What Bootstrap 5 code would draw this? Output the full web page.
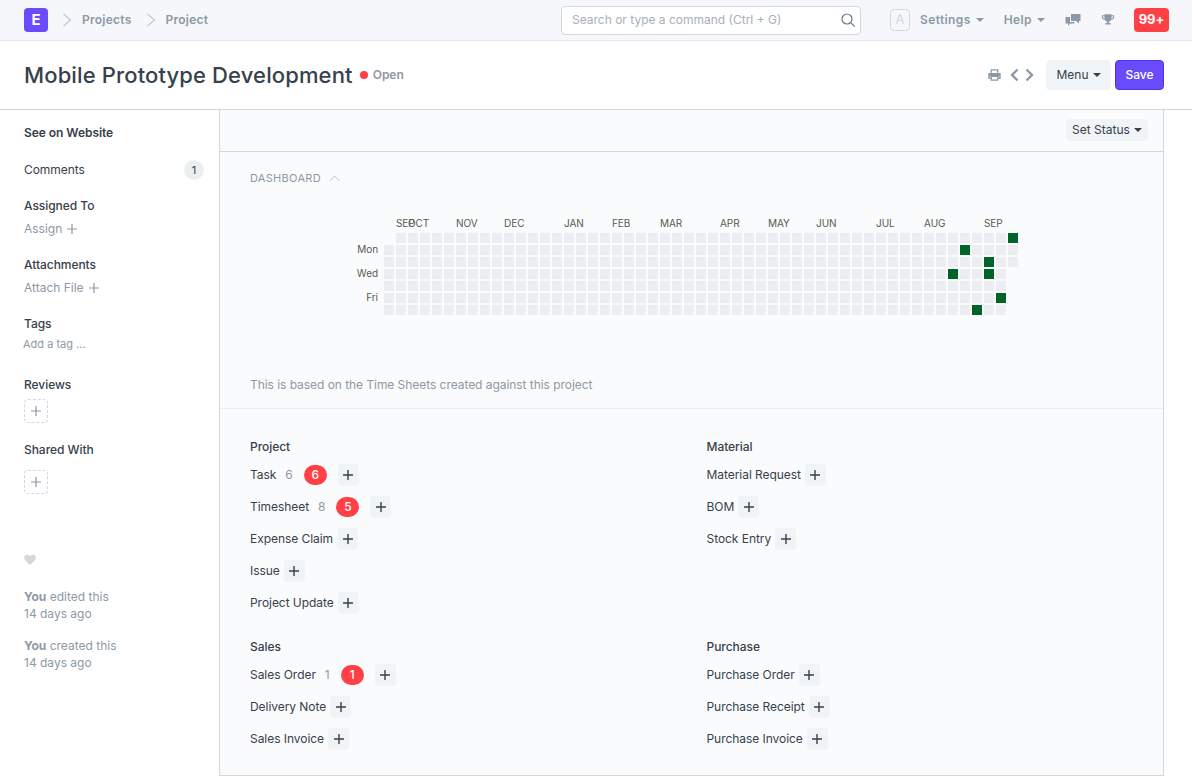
<!DOCTYPE html>
<html lang="en">
<head>
    <meta charset="UTF-8">
    <meta name="viewport" content="width=device-width, initial-scale=1.0">
    <title>Mobile Prototype Development</title>
    <link rel="stylesheet" href="https://cdn.jsdelivr.net/npm/bootstrap@5.3.0/dist/css/bootstrap.min.css">
    <style>
        html, body { height: 777px; overflow: hidden; }
        body { font-family: Inter, "Liberation Sans", sans-serif; font-size: 12px; letter-spacing: -.05px; color: #36414c; background: #fff; }
        .top-bar { height: 41px; background: #f5f7fa; border-bottom: 1px solid #e6e9ed; padding: 0 23px 0 24px; }
        .brand-box { width: 24px; height: 24px; border-radius: 4px; background: #6a4bfc; color: #fff; font-weight: 700; font-size: 15px; }
        .crumb { color: #8d99a6; font-weight: 600; font-size: 12px; letter-spacing: .25px; }
        .crumb-sep { margin: 0 10px 0 14px; }
        .search-box { width: 300px; height: 29px; background: #fff; border: 1px solid #d1d8dd; border-radius: 4px; color: #a7b0ba; padding: 0 4px 0 10px; letter-spacing: 0; }
        .avatar-box { width: 20px; height: 22px; border: 1px solid #d1d8dd; border-radius: 4px; color: #d1d8dd; font-size: 13px; margin-left: 29px; }
        .nav-text { color: #8d99a6; font-weight: 600; letter-spacing: .4px; }
        .nav-text .caret-down { margin-left: 5px; }
        .caret-down { display: inline-block; border-top: 4px solid currentColor; border-left: 4px solid transparent; border-right: 4px solid transparent; margin-left: 4px; vertical-align: 2px; }
        .alert-count { background: #ff4046; color: #fff; font-weight: 700; font-size: 13px; width: 35px; height: 24px; border-radius: 4px; margin-left: 19px; }
        .page-top { height: 69px; padding: 0 28px 0 24px; border-bottom: 1px solid #d1d8dd; }
        .page-name { font-size: 22px; font-weight: 500; letter-spacing: .13px; color: #36414c; margin: 0; line-height: 1; }
        .status-dot { width: 8px; height: 8px; border-radius: 50%; background: #ff4046; margin: 0 5px 0 7px; }
        .status-word { color: #8d99a6; font-weight: 600; letter-spacing: 0; }
        .grey-btn { background: #f0f4f7; color: #36414c; border: 0; border-radius: 4px; font-size: 12px; }
        .menu-btn { width: 65px; height: 30px; margin: 0 4px 0 11px; }
        .save-btn { width: 49px; height: 30px; background: #6a4bfc; color: #fff; border: 1px solid #5131e8; border-radius: 4px; font-size: 12px; font-weight: 500; }
        .page-body { height: 667px; }
        .side-col { width: 219px; flex: none; padding: 0 15px 0 24px; }
        .main-col { width: 945px; flex: none; height: 666px; background: #fafbfc; border: 1px solid #d1d8dd; border-top: 0; }
        .status-row { height: 42px; border-bottom: 1px solid #d1d8dd; padding: 0 15px 2px 0; }
        .status-btn { height: 22px; width: 82px; font-size: 12px; }
        .dash-block { height: 257px; border-bottom: 1px solid #ebeff2; padding: 20px 0 0 30px; }
        .dash-label { color: #8d99a6; font-size: 11px; letter-spacing: .3px; height: 12px; line-height: 12px; }
        .heat-map { display: block; margin: 0; position: absolute; top: 210px; left: 329px; }
        .heat-map text { font-family: Inter, "Liberation Sans", sans-serif; font-size: 10px; fill: #555b51; }
        .dash-note { color: #8d99a6; position: absolute; top: 378px; left: 250px; margin: 0; line-height: 14px; }
        .links-block { padding: 0 0 0 30px; }
        .links-col { width: 456.5px; flex: none; }
        .links-top { padding-top: 30px; }
        .links-bottom { padding-top: 20px; }
        .group-title { font-weight: 500; height: 16px; line-height: 16px; margin-bottom: 4px; }
        .link-row { height: 32px; }
        .link-count { color: #8d99a6; margin-left: 9px; }
        .red-count { background: #ff4046; color: #fff; width: 23px; height: 20px; border-radius: 10px; font-weight: 500; margin: 0 11px 0 11px; }
        .add-btn { width: 21px; height: 22px; background: #f0f4f7; border-radius: 4px; margin-left: 4px; }
        .side-title { font-weight: 500; line-height: 16px; }
        .side-muted { color: #8d99a6; line-height: 16px; letter-spacing: 0; gap: 5px; }
        .count-pill { width: 20px; height: 20px; border-radius: 50%; background: #ebeff2; color: #36414c; font-size: 11px; }
        .dash-add { width: 24px; height: 24px; border: 1px dashed #d1d8dd; border-radius: 4px; }
        .activity-line { color: #8d99a6; line-height: 17px; margin: 0; letter-spacing: 0; }
        .nav-chat { margin-left: 20px; }
        .nav-trophy { margin-left: 20px; }
    </style>
</head>
<body>
    <!-- Top navbar -->
    <nav class="top-bar d-flex align-items-center">
        <div class="brand-box d-flex align-items-center justify-content-center">E</div>
        <svg class="crumb-sep" width="10" height="14" viewBox="0 0 10 14" fill="none" stroke="#c0c9d2" stroke-width="1.2"><path d="M1.500 1l7 6-7 6"/></svg>
        <span class="crumb">Projects</span>
        <svg class="crumb-sep" width="10" height="14" viewBox="0 0 10 14" fill="none" stroke="#c0c9d2" stroke-width="1.2"><path d="M1.500 1l7 6-7 6"/></svg>
        <span class="crumb">Project</span>

        <div class="search-box d-flex align-items-center justify-content-between ms-auto">
            <span>Search or type a command (Ctrl + G)</span>
            <svg width="16" height="16" viewBox="0 0 16 16" fill="none" stroke="#6c7680" stroke-width="1.2"><circle cx="7" cy="7" r="5"/><path d="M10.700 10.700l4 4"/></svg>
        </div>
        <div class="avatar-box d-flex align-items-center justify-content-center">A</div>
        <span class="nav-text" style="margin-left:10px">Settings<span class="caret-down"></span></span>
        <span class="nav-text" style="margin-left:20px">Help<span class="caret-down"></span></span>
        <svg class="nav-chat" width="16" height="14" viewBox="0 0 16 14" fill="#8d99a6"><path d="M6 1h9.500v7H14v2.500L11 8H6z"/><path d="M.5 4H5v5h4.500v1.500H5L3 13v-2.500H.5z"/></svg>
        <svg class="nav-trophy" width="14" height="14" viewBox="0 0 16 15" fill="#8d99a6"><path d="M4 1h8v1h3v2c0 2-1.500 3-3.300 3.200C11 8.500 9.800 9.200 9 9.400V11h2v1.500H5V11h2V9.400C6.200 9.200 5 8.500 4.300 7.200 2.500 7 1 6 1 4V2h3zM2.200 3.200V4c0 1 .7 1.700 1.800 2V3.200zm9.800 0V6c1.100-.3 1.800-1 1.800-2v-.8z"/></svg>
        <div class="alert-count d-flex align-items-center justify-content-center">99+</div>
    </nav>

    <!-- Title row -->
    <header class="page-top d-flex align-items-center">
        <h1 class="page-name">Mobile Prototype Development</h1>
        <span class="status-dot"></span>
        <span class="status-word">Open</span>
        <div class="d-flex align-items-center ms-auto">
            <svg width="13" height="12" viewBox="0 0 14 13" fill="none" stroke="#8d99a6" stroke-width="1.400"><path d="M3.500 4V1h7v3"/><path d="M3 10H1V5h12v5h-2"/><path d="M3.500 8h7v4h-7z"/><path d="M1 5h12v3H1z" fill="#8d99a6" stroke="none"/></svg>
            <svg style="margin-left:8px" width="10" height="14" viewBox="0 0 10 14" fill="none" stroke="#8d99a6" stroke-width="2.400"><path d="M8.500 1.500L3 7l5.500 5.500"/></svg>
            <svg style="margin-left:6px" width="10" height="14" viewBox="0 0 10 14" fill="none" stroke="#8d99a6" stroke-width="2.400"><path d="M1.500 1.500L7 7l-5.500 5.500"/></svg>
            <button class="grey-btn menu-btn p-0">Menu<span class="caret-down"></span></button>
            <button class="save-btn p-0">Save</button>
        </div>
    </header>

    <div class="page-body d-flex">
        <!-- Left sidebar -->
        <aside class="side-col">
            <div class="side-title" style="margin-top:15px;font-weight:600">See on Website</div>
            <div class="d-flex align-items-center justify-content-between" style="margin-top:19px;height:20px">
                <span>Comments</span>
                <span class="count-pill d-flex align-items-center justify-content-center">1</span>
            </div>
            <div class="side-title" style="margin-top:18px">Assigned To</div>
            <div class="side-muted d-flex align-items-center" style="margin-top:7px">Assign
                <svg width="10" height="10" viewBox="0 0 10 10" stroke="#8d99a6" stroke-width="1.200"><path d="M5 0v10M0 5h10"/></svg></div>
            <div class="side-title" style="margin-top:20px">Attachments</div>
            <div class="side-muted d-flex align-items-center" style="margin-top:7px">Attach File
                <svg width="10" height="10" viewBox="0 0 10 10" stroke="#8d99a6" stroke-width="1.200"><path d="M5 0v10M0 5h10"/></svg></div>
            <div class="side-title" style="margin-top:20px">Tags</div>
            <div class="side-muted" style="margin:4px 0 0 -1px;font-size:11px">Add a tag ...</div>
            <div class="side-title" style="margin-top:25px">Reviews</div>
            <div class="dash-add d-flex align-items-center justify-content-center" style="margin-top:6px">
                <svg width="10" height="10" viewBox="0 0 10 10" stroke="#8d99a6" stroke-width="1.200"><path d="M5 0v10M0 5h10"/></svg></div>
            <div class="side-title" style="margin-top:19px">Shared With</div>
            <div class="dash-add d-flex align-items-center justify-content-center" style="margin-top:12px">
                <svg width="10" height="10" viewBox="0 0 10 10" stroke="#8d99a6" stroke-width="1.200"><path d="M5 0v10M0 5h10"/></svg></div>
            <svg class="d-block" style="margin-top:60px" width="12" height="11" viewBox="0 0 12 11" fill="#d1d8dd"><path d="M6 11L1 6C-.5 4.300 0 1 3 .8 4.500.7 5.500 1.500 6 2.400 6.500 1.500 7.500.7 9 .8c3 .2 3.500 3.500 2 5.200z"/></svg>
            <p class="activity-line" style="margin-top:23px"><b>You</b> edited this</p>
            <p class="activity-line">14 days ago</p>
            <p class="activity-line" style="margin-top:15px"><b>You</b> created this</p>
            <p class="activity-line">14 days ago</p>
        </aside>

        <!-- Main form area -->
        <main class="main-col">
            <div class="status-row d-flex align-items-center justify-content-end">
                <button class="grey-btn status-btn p-0">Set Status<span class="caret-down"></span></button>
            </div>

            <section class="dash-block">
                <div class="dash-label d-flex align-items-center">DASHBOARD
                    <svg class="ms-2" width="11" height="7" viewBox="0 0 11 7" fill="none" stroke="#b8c2cc"><path d="M.5 6l5-5 5 5"/></svg>
                </div>
                <svg id="heatMap" class="heat-map" width="700" height="110"></svg>
                <p class="dash-note">This is based on the Time Sheets created against this project</p>
            </section>

            <section class="links-block d-flex flex-wrap" id="linkGroups"></section>
        </main>
    </div>

    <script>
        // Link groups under the dashboard: [label, total, open count]
        const LINK_GROUPS = [
            { title: "Project", spacing: "links-top", items: [["Task", 6, 6], ["Timesheet", 8, 5], ["Expense Claim"], ["Issue"], ["Project Update"]] },
            { title: "Material", spacing: "links-top", items: [["Material Request"], ["BOM"], ["Stock Entry"]] },
            { title: "Sales", spacing: "links-bottom", items: [["Sales Order", 1, 1], ["Delivery Note"], ["Sales Invoice"]] },
            { title: "Purchase", spacing: "links-bottom", items: [["Purchase Order"], ["Purchase Receipt"], ["Purchase Invoice"]] }
        ];
        const PLUS = '<svg width="10" height="10" viewBox="0 0 10 10" stroke="#36414c" stroke-width="1.400"><path d="M5 0v10M0 5h10"/></svg>';

        const linkGroups = document.getElementById("linkGroups");
        LINK_GROUPS.forEach(group => {
            const col = document.createElement("div");
            col.className = "links-col " + group.spacing;
            let html = `<div class="group-title">${group.title}</div>`;
            group.items.forEach(item => {
                html += `<div class="link-row d-flex align-items-center">${item[0]}`;
                if (item[1]) {
                    html += `<span class="link-count">${item[1]}</span><span class="red-count d-flex align-items-center justify-content-center">${item[2]}</span>`;
                }
                html += `<span class="add-btn d-flex align-items-center justify-content-center${item[1] ? " ms-0" : ""}">${PLUS}</span></div>`;
            });
            col.innerHTML = html;
            linkGroups.appendChild(col);
        });

        // Build the heatmap cells, origin of the svg is at 329,210 on the page
        const heatMap = document.getElementById("heatMap");
        const NS = "http://www.w3.org/2000/svg";
        const active = ["52-0", "48-1", "50-2", "47-3", "50-3", "51-5", "49-6"];

        function addText(x, y, label, anchor) {
            const t = document.createElementNS(NS, "text");
            t.setAttribute("x", x);
            t.setAttribute("y", y);
            if (anchor) t.setAttribute("text-anchor", anchor);
            t.textContent = label;
            heatMap.appendChild(t);
        }

        for (let col = 0; col < 53; col++) {
            for (let row = 0; row < 7; row++) {
                if (col === 0 && row === 0) continue;
                if (col === 52 && row > 2) continue;
                const r = document.createElementNS(NS, "rect");
                r.setAttribute("x", 55 + col * 12);
                r.setAttribute("y", 23 + row * 12);
                r.setAttribute("width", 10);
                r.setAttribute("height", 10);
                r.setAttribute("fill", active.includes(col + "-" + row) ? "#006429" : "#ebedf0");
                heatMap.appendChild(r);
            }
        }

        [["SEP", 67], ["OCT", 79], ["NOV", 127], ["DEC", 175], ["JAN", 235], ["FEB", 283], ["MAR", 331],
         ["APR", 391], ["MAY", 439], ["JUN", 487], ["JUL", 547], ["AUG", 595], ["SEP", 655]].forEach(m => addText(m[1], 17, m[0]));
        [["Mon", 43], ["Wed", 67], ["Fri", 91]].forEach(d => addText(49, d[1], d[0], "end"));
    </script>
    <script src="https://cdn.jsdelivr.net/npm/bootstrap@5.3.0/dist/js/bootstrap.bundle.min.js"></script>
</body>
</html>
